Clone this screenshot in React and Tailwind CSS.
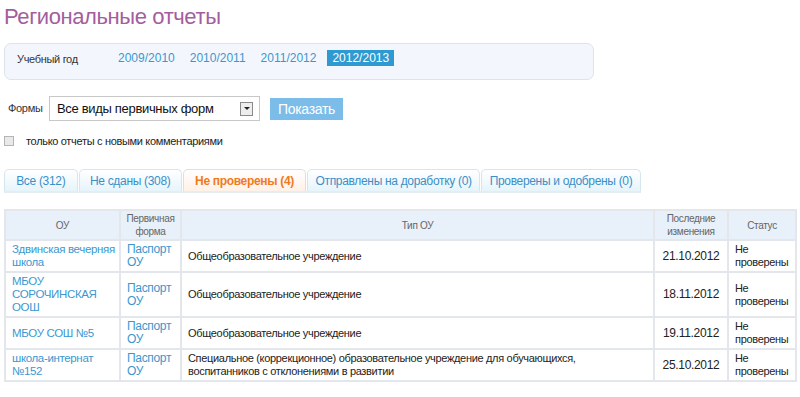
import React from "react";

const tabs = [
  { label: "Все (312)", w: "w-[74px]" },
  { label: "Не сданы (308)", w: "w-[104px]" },
  { label: "Не проверены (4)", w: "w-[124px]", active: true },
  { label: "Отправлены на доработку (0)", w: "w-[174px]" },
  { label: "Проверены и одобрены (0)", w: "w-[161px]" },
];

const rows = [
  { ou: "Здвинская вечерняя школа", type: "Общеобразовательное учреждение", date: "21.10.2012" },
  { ou: "МБОУ СОРОЧИНСКАЯ ООШ", type: "Общеобразовательное учреждение", date: "18.11.2012" },
  { ou: "МБОУ СОШ №5", type: "Общеобразовательное учреждение", date: "19.11.2012" },
  {
    ou: "школа-интернат №152",
    type: "Специальное (коррекционное) образовательное учреждение для обучающихся, воспитанников с отклонениями в развитии",
    date: "25.10.2012",
  },
];

const cell = "border-2 border-[#e3e7ec]";

const App = () => {
  return (
    <div className="w-[800px] h-[397px] bg-white overflow-hidden font-['Liberation_Sans',Arial,sans-serif] tracking-[-0.02em] text-[#222]">
      <h1 className="pl-[4px] pt-[3px] text-[22px] leading-[28px] tracking-[-0.4px] text-[#a35e9d]">
        Региональные отчеты
      </h1>

      <div className="ml-[4px] mt-[12px] w-[590px] h-[37px] rounded-[7px] border border-[#dde3ea] bg-[#f3f7fd] flex items-start pt-[6px]">
        <span className="ml-[12px] mt-[3px] w-[101px] text-[11px] leading-[13px] text-[#333]">Учебный год</span>
        <a className="h-[16px] leading-[16px] text-[12px] tracking-normal text-[#3a98cf]">2009/2010</a>
        <a className="ml-[15px] h-[16px] leading-[16px] text-[12px] tracking-normal text-[#3a98cf]">2010/2011</a>
        <a className="ml-[15px] h-[16px] leading-[16px] text-[12px] tracking-normal text-[#3a98cf]">2011/2012</a>
        <span className="ml-[11px] px-[5px] h-[16px] leading-[16px] text-[12px] tracking-normal bg-[#2d9bd1] text-white">
          2012/2013
        </span>
      </div>

      <div className="flex items-center mt-[16px] h-[25px]">
        <span className="ml-[8px] w-[41px] text-[11px] text-[#333]">Формы</span>
        <div className="w-[211px] h-[25px] border border-[#c8c8c8] flex items-center pl-[7px] pr-[6px]">
          <span className="flex-1 text-[13px] text-[#111]">Все виды первичных форм</span>
          <span className="w-[13px] h-[14px] border border-[#8a8a8a] bg-[#eee] flex items-center justify-center">
            <span className="w-0 h-0 border-l-[3px] border-r-[3px] border-t-[3px] border-l-transparent border-r-transparent border-t-[#222]"></span>
          </span>
        </div>
        <button className="ml-[10px] w-[73px] h-[22px] bg-[#7cbce9] text-white text-[14px] leading-[22px]">
          Показать
        </button>
      </div>

      <div className="flex items-center mt-[14px] h-[12px]">
        <span className="ml-[4px] w-[10px] h-[10px] border border-[#b5b5b5] bg-[#e9e9e9]"></span>
        <span className="ml-[12px] text-[11px] text-[#222]">только отчеты с новыми комментариями</span>
      </div>

      <div className="ml-[4px] mt-[22px] w-[637px] flex items-end gap-[1px] border-b-2 border-[#e3edf2]">
        {tabs.map((t) => (
          <div
            key={t.label}
            className={
              t.active
                ? `${t.w} h-[22px] rounded-t-[5px] border border-b-0 border-[#e8ddd5] bg-gradient-to-b from-white to-[#fff1e7] text-[#f07a1e] font-bold text-[12px] leading-[22px] text-center`
                : `${t.w} h-[22px] rounded-t-[5px] border border-b-0 border-[#d7e6ee] bg-gradient-to-b from-white to-[#e6f4fb] text-[#3a8fc9] text-[12px] leading-[22px] text-center`
            }
          >
            {t.label}
          </div>
        ))}
      </div>

      <table className="ml-[4px] mt-[16px] w-[791px] border-collapse table-fixed">
        <colgroup>
          <col className="w-[115px]" />
          <col className="w-[61px]" />
          <col className="w-[473px]" />
          <col className="w-[74px]" />
          <col className="w-[68px]" />
        </colgroup>
        <thead>
          <tr className="bg-[#e8f0f9] h-[30px] text-[10px] leading-[13px] text-[#666]">
            <th className={`${cell} font-normal`}>ОУ</th>
            <th className={`${cell} font-normal`}>Первичная форма</th>
            <th className={`${cell} font-normal`}>Тип ОУ</th>
            <th className={`${cell} font-normal`}>Последние изменения</th>
            <th className={`${cell} font-normal`}>Статус</th>
          </tr>
        </thead>
        <tbody>
          {rows.map((r) => (
            <tr key={r.date} className="leading-[13px]">
              <td className={`${cell} pl-[6px] pr-0 py-[2px] text-[11.5px] tracking-[-0.03em] text-[#3a98cf]`}>{r.ou}</td>
              <td className={`${cell} px-[6px] py-[2px] text-[12px] text-[#3a98cf]`}>Паспорт ОУ</td>
              <td className={`${cell} pl-[6px] pr-[60px] py-[2px] text-[11px] text-[#222]`}>{r.type}</td>
              <td className={`${cell} px-[4px] py-[2px] text-[12px] text-[#222] text-center`}>{r.date}</td>
              <td className={`${cell} px-[6px] py-[2px] text-[11px] text-[#222]`}>Не проверены</td>
            </tr>
          ))}
        </tbody>
      </table>
    </div>
  );
};

export default App;
